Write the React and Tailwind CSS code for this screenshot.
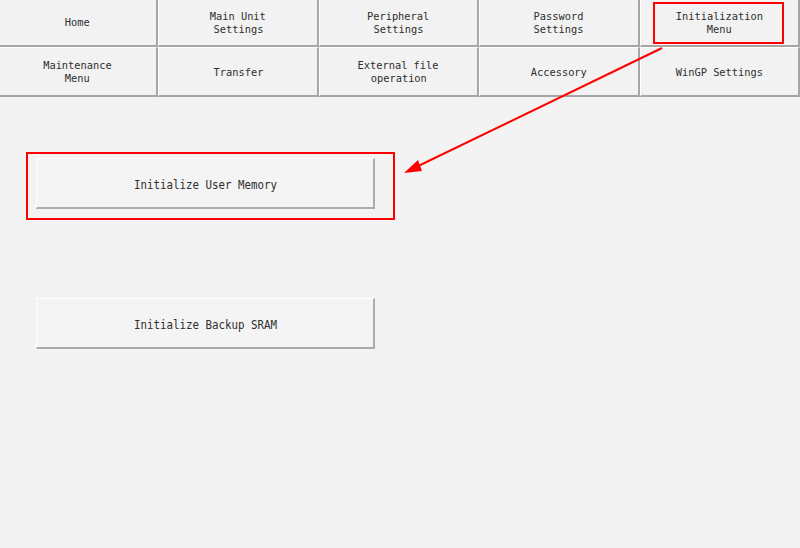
import React from 'react';

const tabs = [
    ['Home'],
    ['Main Unit', 'Settings'],
    ['Peripheral', 'Settings'],
    ['Password', 'Settings'],
    ['Initialization', 'Menu'],
    ['Maintenance', 'Menu'],
    ['Transfer'],
    ['External file', 'operation'],
    ['Accessory'],
    ['WinGP Settings'],
];

const font = { fontFamily: '"DejaVu Sans Mono", "Liberation Mono", monospace' };

function Tab({ lines, row }) {
    return (
        <div
            className={`flex flex-col items-center justify-center bg-[#f2f2f2] border-l border-l-white border-r-2 border-r-[#a6a6a6] border-b-2 border-b-[#a6a6a6] text-[11px] leading-[13px] text-[#2e2e2e] ${
                row === 0 ? 'h-[47px]' : 'h-[50px] border-t border-t-white pt-[1px]'
            }`}
        >
            {lines.map((l) => (
                <span key={l} className="inline-block scale-x-[0.94]">{l}</span>
            ))}
        </div>
    );
}

function Button({ label }) {
    return (
        <button className="w-[339px] h-[51px] pt-[3px] bg-[#f4f4f4] border-t border-l border-t-white border-l-white border-r-2 border-b-2 border-r-[#ababab] border-b-[#ababab] text-[12px] text-[#2e2e2e]">
            <span className="inline-block scale-x-[0.9]">{label}</span>
        </button>
    );
}

export default function App() {
    return (
        <div className="relative w-[800px] h-[548px] bg-[#f3f3f3] overflow-hidden" style={font}>
            <div className="grid grid-cols-5 w-[802px] ml-[-2px]">
                {tabs.map((t, i) => (
                    <Tab key={i} lines={t} row={i < 5 ? 0 : 1} />
                ))}
            </div>

            <div className="flex flex-col pl-[36px] pt-[61px] gap-[89px]">
                <Button label="Initialize User Memory" />
                <Button label="Initialize Backup SRAM" />
            </div>

            {/* annotations */}
            <div className="absolute left-[653px] top-[2px] w-[131px] h-[42px] border-2 border-[#ff0000]" />
            <div className="absolute left-[26px] top-[152px] w-[369px] h-[68px] border-2 border-[#ff0000]" />
            <svg className="absolute left-0 top-0" width="800" height="548">
                <line x1="662" y1="48" x2="412" y2="169" stroke="#ff0000" strokeWidth="2" />
                <polygon points="404,173 418,160 422,171" fill="#ff0000" />
            </svg>
        </div>
    );
}
